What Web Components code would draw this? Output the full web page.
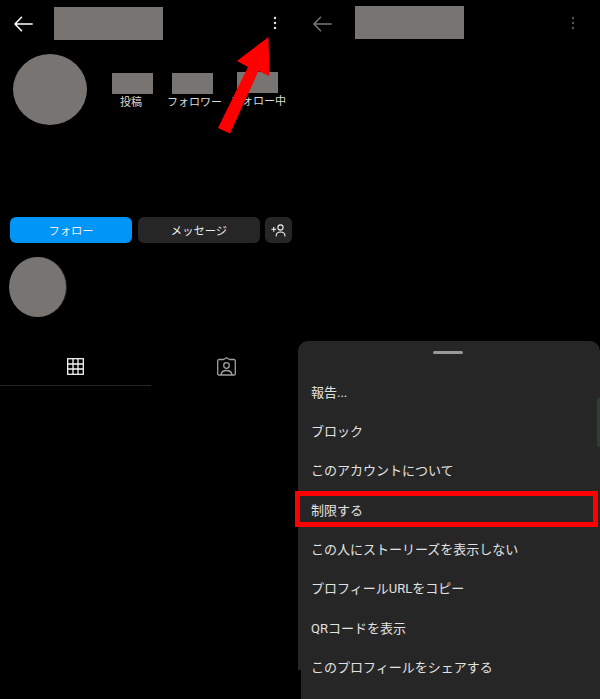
<!DOCTYPE html>
<html lang="ja">
<head>
<meta charset="utf-8">
<title>Profile menu</title>
<style>
html,body{margin:0;padding:0;background:#000;}
body{font-family:Roboto,"Noto Sans CJK JP",sans-serif;color:#f0f0f0;}
</style>
</head>
<body>
<x-app>
  <x-profile-pane slot="left"></x-profile-pane>
  <x-menu-pane slot="right">
    <x-sheet-item>報告...</x-sheet-item>
    <x-sheet-item>ブロック</x-sheet-item>
    <x-sheet-item>このアカウントについて</x-sheet-item>
    <x-sheet-item>制限する</x-sheet-item>
    <x-sheet-item>この人にストーリーズを表示しない</x-sheet-item>
    <x-sheet-item>プロフィールURLをコピー</x-sheet-item>
    <x-sheet-item>QRコードを表示</x-sheet-item>
    <x-sheet-item>このプロフィールをシェアする</x-sheet-item>
  </x-menu-pane>
</x-app>
<script>
function def(name, css, html, init){
  customElements.define(name, class extends HTMLElement{
    constructor(){
      super();
      const r=this.attachShadow({mode:'open'});
      r.innerHTML='<style>'+css+'</style>'+html;
      if(init) init(this,r);
    }
  });
}
const G='#787471';

def('x-app',
 `:host{display:block;position:relative;width:600px;height:699px;overflow:hidden;background:#000}
  .cols{display:grid;grid-template-columns:300px 300px;height:100%}
  svg{position:absolute;left:0;top:0;pointer-events:none}`,
 `<div class="cols"><slot name="left"></slot><slot name="right"></slot></div>
  <svg width="600" height="699" viewBox="0 0 600 699"><polygon fill="#ff0000" points="268.5,37 237,61 248,67 218,128 230,133.500 258.500,71 269.500,76"/></svg>`);

def('x-top-bar',
 `:host{display:flex;align-items:center;height:47px;position:relative;
    padding-left:var(--pl,14px);box-sizing:border-box;color:var(--c,#fff)}
  .back{width:19px;height:16px;display:block;flex:none;margin-top:1px}
  .name{width:109px;height:33px;background:${G};flex:none;margin-left:var(--gap,21px);margin-top:var(--nt,0)}
  .dots{margin-left:auto;margin-right:var(--dr,23px);width:4px;height:14px;display:block;flex:none;margin-top:-1px;color:var(--dc,#e8e8e8)}`,
 `<svg class="back" viewBox="0 0 19 16" fill="none" stroke="currentColor" stroke-width="1.500" stroke-linecap="round" stroke-linejoin="round"><path d="M18.200 8H1M7.500 1.200 1 8l6.500 6.800"/></svg>
  <div class="name"></div>
  <svg class="dots" viewBox="0 0 4 14" fill="currentColor"><circle cx="2" cy="2" r="1.200"/><circle cx="2" cy="7" r="1.200"/><circle cx="2" cy="12" r="1.200"/></svg>`);

def('x-stat',
 `:host{display:block;width:41px;flex:none;margin-top:var(--t,0)}
  .box{height:21px;background:${G}}
  .lab{font-size:11px;line-height:15px;color:#dcdcdc;white-space:nowrap;margin:1px 0 0 var(--o,0)}`,
 `<div class="box"></div><div class="lab"><slot></slot></div>`);

def('x-btn',
 `:host{display:flex;align-items:center;justify-content:center;height:26px;box-sizing:border-box;
    border-radius:6px;background:var(--bg,#262626);color:#ededed;font-size:11.300px;flex:none;width:var(--w,122px)}`,
 `<slot></slot>`);

def('x-profile-pane',
 `:host{display:block;height:699px;width:300px}
  .head{display:flex;padding:7px 0 0 13px}
  .avatar{width:74px;height:71px;border-radius:50%;background:${G};flex:none}
  .stats{display:flex;margin:19px 0 0 25px}
  .stats x-stat:nth-child(1){--o:8px}
  .stats x-stat:nth-child(2){--o:-5px;margin-left:19px}
  .stats x-stat:nth-child(3){--o:-6px;--t:-1px;margin-left:24px}
  .btns{display:flex;gap:6px;padding-left:10px;margin-top:92px}
  .btns x-btn:nth-child(3){margin-left:-1px}
  .hl{width:57px;height:60px;border-radius:50%;background:${G};margin:14px 0 0 9px;box-shadow:1px 0 0 #2a2a2a}
  .tabs{display:grid;grid-template-columns:151px 151px;margin-top:30px;height:39px}
  .tab{display:flex;align-items:center;justify-content:center;box-sizing:border-box;height:39px;padding-top:0}
  .tab.on{border-bottom:1px solid #262626}
  svg{display:block}`,
 `<x-top-bar></x-top-bar>
  <div class="head"><div class="avatar"></div>
    <div class="stats"><x-stat>投稿</x-stat><x-stat>フォロワー</x-stat><x-stat>フォロー中</x-stat></div>
  </div>
  <div class="btns">
    <x-btn style="--bg:#0095f6">フォロー</x-btn>
    <x-btn>メッセージ</x-btn>
    <x-btn style="--w:27px"><svg width="15" height="13" viewBox="0 0 15 13" fill="none" stroke="#f2f2f2" stroke-width="1.100" stroke-linecap="round"><path d="M0.800 5.200h4M2.800 3.200v4"/><circle cx="9.500" cy="3.500" r="2.600"/><path d="M5.200 12c0-2.700 2-4 4.300-4s4.500 1.300 4.500 4"/></svg></x-btn>
  </div>
  <div class="hl"></div>
  <div class="tabs">
    <div class="tab on"><svg width="17" height="17" viewBox="0 0 17 17" fill="none" stroke="#f5f5f5" stroke-width="1.300"><rect x="0.700" y="0.700" width="15.600" height="15.600"/><path d="M6 .7v15.600M11 .7v15.600M.7 6h15.600M.7 11h15.600"/></svg></div>
    <div class="tab"><svg width="19" height="19" viewBox="0 0 19 19" fill="none" stroke="#a0a0a0" stroke-width="1.300"><path d="M6.500 2.500H2a1.300 1.300 0 0 0-1.300 1.300V16.700A1.300 1.300 0 0 0 2 18H17a1.300 1.300 0 0 0 1.300-1.300V3.800A1.300 1.300 0 0 0 17 2.500H12.500L9.500 .7z" stroke-linejoin="round"/><circle cx="9.500" cy="8.500" r="2.800"/><path d="M4 18c.3-3 2.500-4.500 5.500-4.500S14.700 15 15 18"/></svg></div>
  </div>`);

def('x-sheet-item',
 `:host{display:flex;align-items:center;height:39.330px;padding-left:13px;font-size:13px;color:#e2e2e2;white-space:nowrap}`,
 `<slot></slot>`);

def('x-menu-pane',
 `:host{display:flex;flex-direction:column;height:699px;width:300px;position:relative}
  x-top-bar{--pl:13px;--gap:23px;--c:#787878;--dc:#555;--dr:25px;--nt:-2px}
  .sheet{position:relative;margin:auto 0 0 -2px;width:302px;height:358px;box-sizing:border-box;background:#262626;
    border-radius:10px 10px 0 0;padding-top:10px}
  .grab{width:30px;height:3px;border-radius:2px;background:#9a9a9a;margin:0 auto 17.600px;position:relative;left:-1px}
  .mark{position:absolute;left:-3px;top:150px;width:303px;height:36px;box-sizing:border-box;border:5px solid #ff0000}
  .bar{position:absolute;right:0;top:57px;width:3px;height:49px;background:#2f3d33;border-radius:2px 0 0 2px}
  .notch{position:absolute;left:0;bottom:0;width:3px;height:29px;background:#000}`,
 `<x-top-bar></x-top-bar>
  <div class="sheet">
    <div class="grab"></div>
    <slot></slot>
    <div class="bar"></div>
    <div class="notch"></div>
    <div class="mark"></div>
  </div>`);
</script>
</body>
</html>
